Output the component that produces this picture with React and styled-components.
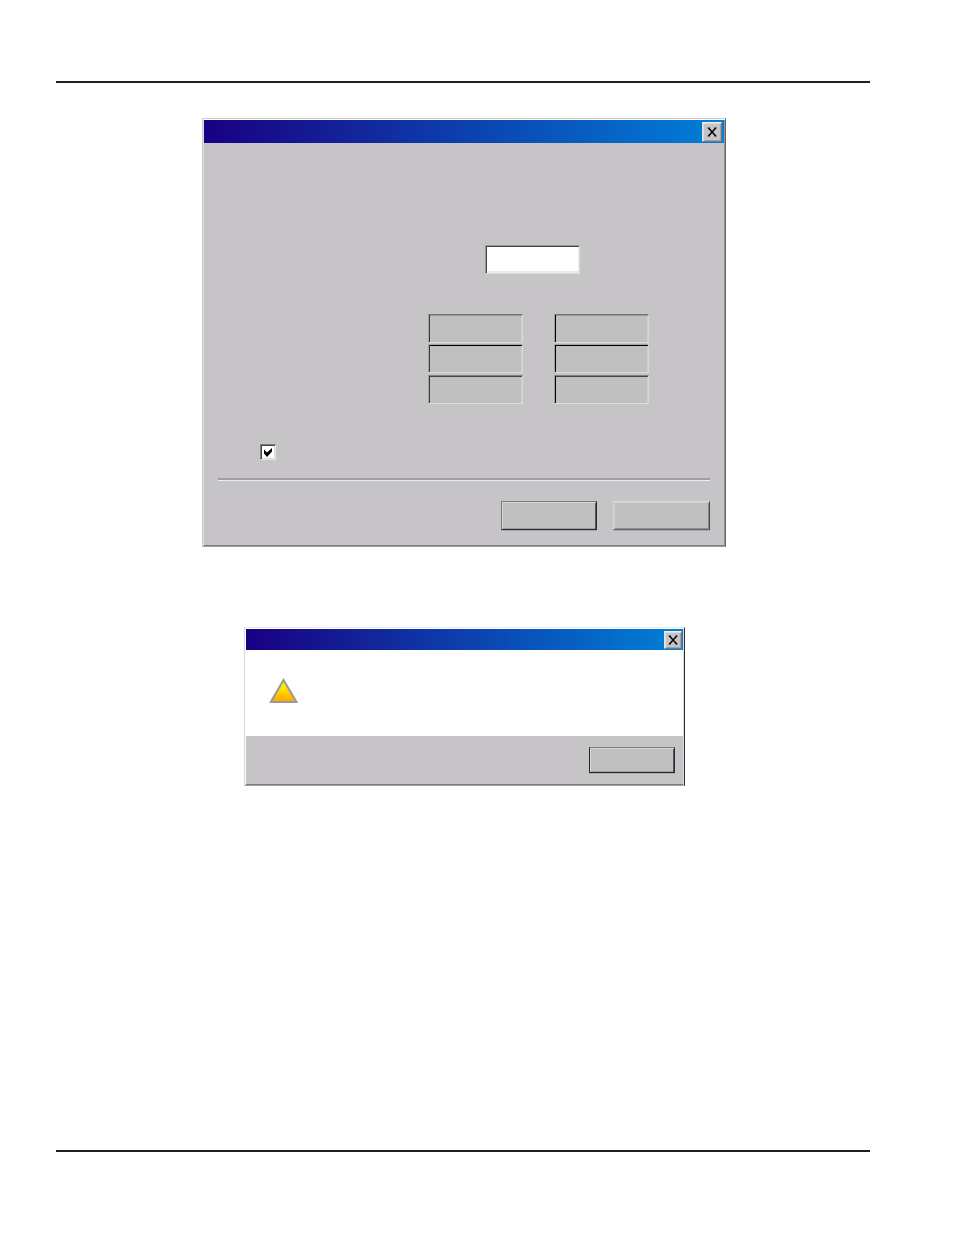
import React from "react"
import styled, { createGlobalStyle, ThemeProvider } from "styled-components"

const theme = {
  face: "#c6c4c7",
  control: "#c0c0c0",
  ink: "#231f20",
  titleFrom: "#190082",
  titleTo: "#0080d8",
}

const GlobalStyle = createGlobalStyle`
  *, *::before, *::after {
    box-sizing: border-box;
  }

  body {
    margin: 0;
    background: white;
    font-family: "Liberation Sans", Arial, sans-serif;
    font-size: 12px;
  }
`

const Page = styled.div`
  min-height: 100vh;
  padding: 81px 84px 83px 56px;
  display: flex;
  flex-direction: column;
`

const Rule = styled.hr`
  width: 100%;
  height: 2px;
  margin: 0;
  border: none;
  flex: none;
  background: ${props => props.theme.ink};
`

const Main = styled.main`
  flex: 1;
  padding: 35px 0 35px 2px;
  display: flex;
  flex-direction: column;
  align-items: center;
  gap: 80px;
`

const Window = styled.section`
  width: 100%;
  max-width: ${props => props.$width};
  padding: 1px;
  border: 1px solid;
  border-color: ${props => props.$border};
  box-shadow: ${props => props.$bevel};
  background: ${props => props.$background || props.theme.face};
`

const TitleBar = styled.header`
  height: ${props => props.$height};
  padding: 2px ${props => props.$inset} 0 0;
  display: flex;
  justify-content: flex-end;
  align-items: flex-start;
  background: linear-gradient(
    to right,
    ${props => props.theme.titleFrom},
    ${props => props.theme.titleTo}
  );
`

const CloseButton = styled.button`
  width: ${props => props.$size};
  height: ${props => props.$size};
  padding: 0;
  display: grid;
  place-items: center;
  border: 1px solid;
  border-color: #e9eef3 #6f7782 #6f7782 #dfe6ee;
  box-shadow: inset 1px 1px #dcdcdc, inset -1px -1px #a2a0a3;
  background: ${props => props.theme.face};

  svg {
    display: block;
  }
`

const Form = styled.form`
  padding: 102px 14px 15px;
  display: flex;
  flex-direction: column;
`

const TextField = styled.input`
  width: 95px;
  height: 29px;
  padding: 2px 6px;
  font: inherit;
  border: 1px solid;
  border-color: #9b999c #dededf #dededf #9b999c;
  border-radius: 0;
  box-shadow: inset 1px 1px #444246, inset -1px -2px #e9e8ea;
  background: white;
`

const ReadOnlyField = styled(TextField)`
  border-color: ${props => props.$outer} #d8d7d9 #dcdbdd #a5a3a6;
  box-shadow: inset 1px 0 ${props => props.$left},
    inset 0 1px ${props => props.$top}, inset -1px 0 #cfced0;
  background: ${props => props.theme.control};
`

const EntryRow = styled.div`
  padding-right: 130px;
  display: flex;
  justify-content: flex-end;
`

const FieldGrid = styled.div`
  padding-right: 61px;
  margin-top: 40px;
  display: grid;
  grid-template-columns: 95px 95px;
  grid-template-rows: 30px 31px 29px;
  column-gap: 31px;
  justify-content: end;
  align-items: start;
`

const CheckRow = styled.label`
  width: 16px;
  height: 16px;
  margin: 40px 0 18px 42px;
  display: grid;

  input,
  svg {
    grid-area: 1 / 1;
  }

  input {
    appearance: none;
    width: 16px;
    height: 16px;
    margin: 0;
    border: 1px solid;
    border-color: #7f7d80 #e6e6e6 #e6e6e6 #7f7d80;
    box-shadow: inset 1px 1px #444246, inset -1px -1px #dcdbdd;
    background: white;
  }

  svg {
    visibility: hidden;
    pointer-events: none;
  }

  input:checked + svg {
    visibility: visible;
  }
`

const Divider = styled.hr`
  width: 100%;
  height: 3px;
  margin: 0;
  border: none;
  border-top: 2px solid #a09ea1;
  border-bottom: 1px solid #ebeaec;
`

const Actions = styled.div`
  margin-top: 20px;
  display: flex;
  justify-content: flex-end;
  gap: 16px;
`

const Button = styled.button`
  width: ${props => props.$width || "96px"};
  height: ${props => props.$height || "29px"};
  padding: 0;
  font: inherit;
  border: 1px solid;
  border-color: #dbdadc #444246 #626063 #d3d2d4;
  box-shadow: inset 1px 1px #cfcfcf, inset -1px -1px #8f8e90,
    0 1px #aaa8ab;
  background: ${props => props.theme.control};
`

const DefaultButton = styled(Button)`
  border-color: #7b797c #2a282c #2a282c ${props => props.$left || "#7b797c"};
  box-shadow: inset 1px 1px #d6d6d6, inset -1px 0 #58565a,
    inset 0 -1px #9d9c9e, 0 1px #aaa8ab;
`

const Message = styled.div`
  height: 86px;
  padding: 28px 23px;
  background: white;

  svg {
    display: block;
  }
`

const MessageFooter = styled.footer`
  padding: 11px 8px 11px;
  display: flex;
  justify-content: flex-end;
  background: ${props => props.theme.face};
`

const CloseIcon = ({ size = 10 }) => (
  <svg width={size} height={size} viewBox="0 0 10 10" aria-hidden="true">
    <path
      d="M1.5 1 8.7 9M8.7 1 1.5 9"
      fill="none"
      stroke="#000"
      strokeWidth="1.5"
    />
    <path
      d="M.6 1h2.2M7.4 1h2.2M.6 9h2.2M7.4 9h2.2"
      fill="none"
      stroke="#000"
      strokeWidth=".9"
    />
  </svg>
)

const CheckIcon = () => (
  <svg width="16" height="16" viewBox="0 0 16 16" aria-hidden="true">
    <path d="M4 5.6 7 8.4 12 4v3.4L7 13 4 9.4Z" fill="#000" />
  </svg>
)

const WarningIcon = () => (
  <svg width="30" height="25" viewBox="0 0 30 25" aria-hidden="true">
    <defs>
      <linearGradient id="warning" x1="0" y1="0" x2="0" y2="1">
        <stop offset="0.1" stopColor="#ffff00" />
        <stop offset="1" stopColor="#ffa400" />
      </linearGradient>
    </defs>
    <path
      d="M14.5 2 27.5 24H1.8Z"
      fill="url(#warning)"
      stroke="#999"
      strokeWidth="2"
    />
  </svg>
)

const rows = [
  { outer: "#767376", top: "#9c9a9c" },
  { outer: "#a5a3a6", top: "#000" },
  { outer: "#817f82", top: "#454346" },
]

const SettingsDialog = () => (
  <Window
    role="dialog"
    aria-label="Settings"
    $width="524px"
    $border="#cbcacc #626063 #a19fa2 #c9c8ca"
    $bevel="inset 0 1px #fff, inset 1px 0 #dedde0, inset -1px 0 #98969a, inset 0 -1px #7b797c"
  >
    <TitleBar $height="23px" $inset="2px">
      <CloseButton type="button" aria-label="Close" $size="20px">
        <CloseIcon />
      </CloseButton>
    </TitleBar>
    <Form onSubmit={event => event.preventDefault()}>
      <EntryRow>
        <TextField type="text" aria-label="Value" />
      </EntryRow>
      <FieldGrid>
        {rows.map((row, i) => (
          <React.Fragment key={i}>
            <ReadOnlyField
              readOnly
              aria-label={`Row ${i + 1}, first value`}
              $outer={row.outer}
              $top={row.top}
              $left="#39373b"
            />
            <ReadOnlyField
              readOnly
              aria-label={`Row ${i + 1}, second value`}
              $outer={row.outer}
              $top={row.top}
              $left="#000"
            />
          </React.Fragment>
        ))}
      </FieldGrid>
      <CheckRow>
        <input type="checkbox" aria-label="Enable" defaultChecked />
        <CheckIcon />
      </CheckRow>
      <Divider />
      <Actions>
        <DefaultButton type="submit" aria-label="OK" />
        <Button type="button" aria-label="Cancel" $width="97px" />
      </Actions>
    </Form>
  </Window>
)

const WarningDialog = () => (
  <Window
    role="alertdialog"
    aria-label="Warning"
    $width="441px"
    $border="#e9e8e8 #2d2b2f #a3a1a4 #dad9da"
    $bevel="inset 1px 1px #fff, inset -1px 0 #dcdbdd, inset 0 -1px #7b797c"
    $background="white"
  >
    <TitleBar $height="21px" $inset="1px">
      <CloseButton type="button" aria-label="Close" $size="18px">
        <CloseIcon />
      </CloseButton>
    </TitleBar>
    <Message>
      <WarningIcon />
    </Message>
    <MessageFooter>
      <DefaultButton
        type="button"
        aria-label="OK"
        $width="86px"
        $height="26px"
        $left="#2a282c"
      />
    </MessageFooter>
  </Window>
)

const App = () => (
  <ThemeProvider theme={theme}>
    <GlobalStyle />
    <Page>
      <Rule />
      <Main>
        <SettingsDialog />
        <WarningDialog />
      </Main>
      <Rule />
    </Page>
  </ThemeProvider>
)

export default App
